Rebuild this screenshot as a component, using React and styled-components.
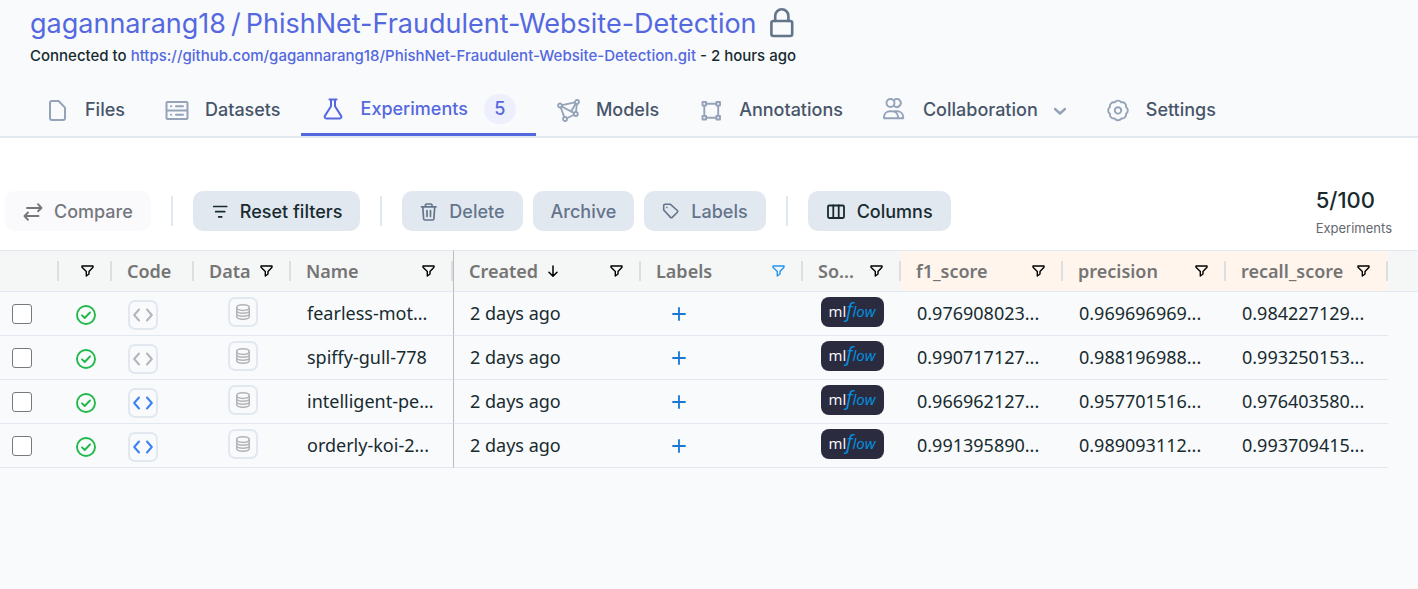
import React from "react";
import styled, { createGlobalStyle, css } from "styled-components";

const GlobalStyle = createGlobalStyle`
  *, *::before, *::after { box-sizing: border-box; }
  html { background: #f9fafc; }
  body { margin: 0; font-family: Inter, "Liberation Sans", sans-serif; color: #172b2f; }
  a { color: inherit; text-decoration: none; }
  button { font: inherit; cursor: pointer; }
`;

/* ---------- icons ---------- */

const Svg = styled.svg`
  display: block;
  flex: none;
  fill: none;
  stroke: currentColor;
  stroke-width: ${(p) => p.$weight || 2};
  stroke-linecap: round;
  stroke-linejoin: round;
`;

const Icon = ({ w = 24, h = w, weight, children }) => (
  <Svg width={w} height={h} viewBox={`0 0 ${w} ${h}`} $weight={weight} aria-hidden="true">
    {children}
  </Svg>
);

const LockIcon = () => (
  <Icon w={26} h={34} weight={2.6}>
    <rect x="2.400" y="14" width="20.800" height="15" rx="2" />
    <path d="M6.200 14V8.900a6.600 6.600 0 0 1 13.200 0V14" />
  </Icon>
);
const FileIcon = () => (
  <Icon>
    <path d="M7 3h6.600L20 9.600V20a2 2 0 0 1-2 2H7a2 2 0 0 1-2-2V5a2 2 0 0 1 2-2Z" />
  </Icon>
);
const DatasetIcon = () => (
  <Icon weight={2}>
    <path d="M2.500 4h19a1 1 0 0 1 1 1v15a1 1 0 0 1-1 1h-19a1 1 0 0 1-1-1V5a1 1 0 0 1 1-1ZM2 12.500h20M6 8.300h.2M11 8.300h7M6 16.800h.2M11 16.800h7" />
  </Icon>
);
const FlaskIcon = () => (
  <Icon>
    <path d="M8.500 2.500h7M10 2.500v6.800L3.900 18.900a1.700 1.700 0 0 0 1.400 2.600h13.400a1.700 1.700 0 0 0 1.400-2.600L14 9.300V2.500" />
  </Icon>
);
const ModelIcon = () => (
  <Icon weight={1.8}>
    <circle cx="4" cy="7.500" r="2" />
    <circle cx="21" cy="4" r="2" />
    <circle cx="19.800" cy="16" r="2" />
    <circle cx="9" cy="21" r="2" />
    <path d="M6 7.100 19 4.400M5.800 8.500l12.300 6.600M4.700 9.400l3.600 9.700M20.800 6l-.8 8M18 16.800l-7.200 3.400M19.600 5.500 15.500 13" />
  </Icon>
);
const AnnotationIcon = () => (
  <Icon weight={1.9}>
    <rect x="3.500" y="4" width="3.600" height="3.600" />
    <rect x="17.400" y="4" width="3.600" height="3.600" />
    <rect x="3.500" y="17.900" width="3.600" height="3.600" />
    <rect x="17.400" y="17.900" width="3.600" height="3.600" />
    <path d="M7.100 5.800h10.300M7.100 19.700h10.300M5.300 7.600v10.300M19.200 7.600v10.300" />
  </Icon>
);
const PeopleIcon = () => (
  <Icon weight={1.9}>
    <circle cx="7.500" cy="5" r="4" />
    <path d="M11.200 1.900a4 4 0 1 1 0 6.200" />
    <path d="M1 20.200v-1.700a6 6 0 0 1 6-5.300h2a6 6 0 0 1 6 5.300v1.700ZM11.500 13.200H14a6 6 0 0 1 6.200 5.300v1.700H15" />
  </Icon>
);
const ChevronIcon = () => (
  <Icon w={12} weight={2.400}>
    <path d="m1 5 5 4.500L11 5" />
  </Icon>
);
const GearIcon = () => (
  <Icon weight={1.9}>
    <path d="M8.670 4.360A4 4 0 0 1 15.330 4.360 4 4 0 0 1 20.040 9.070 4 4 0 0 1 20.040 15.730 4 4 0 0 1 15.330 20.440 4 4 0 0 1 8.670 20.440 4 4 0 0 1 3.960 15.730 4 4 0 0 1 3.960 9.070 4 4 0 0 1 8.670 4.360Z" />
    <circle cx="12" cy="12.400" r="3.200" />
  </Icon>
);
const CompareIcon = () => (
  <Icon w={20} weight={1.900}>
    <path d="M4 6h14M15 2.200 18.500 6 15 9.200M15.500 14H2M5 10.500 1.500 14 5 17.800" />
  </Icon>
);
const LinesIcon = () => (
  <Icon w={18} weight={1.700}>
    <path d="M2.700 3.500h13M4.700 8.700h9M7.700 13.900h3" />
  </Icon>
);
const TrashIcon = () => (
  <Icon w={18} weight={1.700}>
    <path d="M1.500 3.800h14.500M5.500 3.800V2a1 1 0 0 1 1-1H11a1 1 0 0 1 1 1v1.800M2.800 4l.8 11.700A1.400 1.400 0 0 0 5 17h7.500a1.400 1.400 0 0 0 1.400-1.300L14.700 4M7 7.500v6M10.500 7.500v6" />
  </Icon>
);
const TagIcon = () => (
  <Icon w={18} weight={1.600}>
    <path d="M1.700 2.600A1.400 1.400 0 0 1 3.100 1.200h5l7.300 6.300a1.200 1.200 0 0 1 0 1.700L10.200 14.400a1.200 1.200 0 0 1-1.700 0L1.700 7Z" />
    <path d="M4.800 4.500h.1" />
  </Icon>
);
const ColumnsIcon = () => (
  <Icon w={20} weight={1.800}>
    <rect x="2" y="3.500" width="16" height="12.500" rx="1.200" />
    <path d="M7.300 3.500v12.500M12.700 3.500v12.500" />
  </Icon>
);
const FunnelIcon = () => (
  <Icon w={13} h={12} weight={1.400}>
    <path d="M1 1h11v1.300L8 6.500V9L5.300 11V6.500L1 2.300Z" />
  </Icon>
);
const ArrowDownIcon = () => (
  <Icon w={12} weight={1.500}>
    <path d="M6 1v10M2 7.200l4 4 4-4" />
  </Icon>
);
const CheckCircleIcon = () => (
  <Icon w={20} weight={1.900}>
    <circle cx="10" cy="10" r="9" />
    <path d="m6 10.300 2.700 2.700L14 7.500" />
  </Icon>
);
const CodeIcon = () => (
  <Icon w={20} weight={2}>
    <path d="M6 4.500 1.200 10 6 15.500M14 4.500l4.800 5.500L14 15.500" />
  </Icon>
);
const DatabaseIcon = () => (
  <Icon w={16} weight={1.500}>
    <ellipse cx="8" cy="3.600" rx="6.300" ry="2.800" />
    <path d="M1.700 3.600v9c0 1.500 2.800 2.700 6.300 2.700s6.300-1.200 6.300-2.700v-9M1.700 6.600c0 1.500 2.800 2.700 6.300 2.700s6.300-1.200 6.300-2.700M1.700 9.600c0 1.500 2.800 2.700 6.300 2.700s6.300-1.200 6.300-2.700" />
  </Icon>
);
const PlusIcon = () => (
  <Icon w={14} weight={1.800}>
    <path d="M7 1v12M1 7h12" />
  </Icon>
);

/* ---------- header ---------- */

const Header = styled.header`
  background: #f9fafc;
  border-bottom: 2px solid #e2e8f0;
`;

const Heading = styled.div`
  padding: 8px 30px 0;
`;

const TitleRow = styled.div`
  display: flex;
  align-items: center;
  gap: 12px;
  height: 32px;
  color: #64748b;
`;

const Title = styled.h1`
  display: flex;
  gap: 5px;
  margin: 0;
  font-size: 27px;
  font-weight: 400;
  line-height: 32px;
  color: #5468e0;
`;

const Connection = styled.p`
  margin: 6px 0 0;
  font-size: 15px;
  font-weight: 500;
  line-height: 20px;

  a { color: #5468e0; }
`;

const Tabs = styled.nav`
  display: flex;
  margin-top: 18px;
  padding-left: 25px;
`;

const Tab = styled.a`
  display: flex;
  align-items: center;
  gap: 16px;
  height: 52px;
  padding: 0 20px;
  font-size: 18px;
  font-weight: 500;
  line-height: 24px;
  white-space: nowrap;
  color: #475569;

  svg { color: #94a3b8; }

  ${(p) => p.$active && css`
    border-bottom: 3px solid #5468e0;
    color: #5468e0;
    svg { color: #5468e0; }
  `}
`;

const Badge = styled.span`
  width: 32px;
  border-radius: 16px;
  background: #edf0fc;
  line-height: 30px;
  text-align: center;
`;

/* ---------- toolbar ---------- */

const Toolbar = styled.div`
  display: flex;
  align-items: center;
  gap: 20px;
  padding: 44px 26px 10px 5px;
  background: #fff;
`;

const ButtonGroup = styled.div`
  display: flex;
  gap: 10px;
`;

const Divider = styled.span`
  width: 2px;
  height: 30px;
  background: #e2e8f0;
`;

const ToolButton = styled.button`
  display: flex;
  align-items: center;
  gap: 11px;
  height: 40px;
  padding: 2px 18px 0;
  border: 0;
  border-radius: 10px;
  background: ${(p) => (p.$tone === "ghost" ? "#fafafc" : "#e2e8f0")};
  color: ${(p) => ({ ghost: "#74777c", muted: "#64748b" }[p.$tone] || "#172b2f")};
  font-size: 18px;
  font-weight: 500;
  line-height: 24px;
  white-space: nowrap;
`;

const Quota = styled.div`
  margin-left: auto;
  padding-top: 4px;
`;

const QuotaValue = styled.div`
  font-size: 22px;
  font-weight: 500;
  line-height: 28px;
`;

const QuotaLabel = styled.div`
  padding: 5px 0 3px;
  font-size: 13px;
  line-height: 18px;
  color: #64686e;
`;

/* ---------- table ---------- */

const Table = styled.table`
  width: 100%;
  table-layout: fixed;
  border-collapse: separate;
  border-spacing: 0;
  font-family: "Noto Sans", "Open Sans", sans-serif;
  font-size: 18px;
`;

const Col = styled.col`
  width: ${(p) => (p.$width ? `${p.$width}px` : "auto")};
`;

const HeadCell = styled.th`
  height: 42px;
  padding: 0;
  border-top: 1px solid #e2e8f0;
  border-bottom: 1px solid #e2e8f0;
  border-left: ${(p) => (p.$pinEdge ? "1px solid #b8bcc2" : "0")};
  background: ${(p) => (p.$metric ? "#fff5ed" : "#f5f6f6")};
  font-weight: 600;
  text-align: left;
  color: #757575;
`;

const HeadInner = styled.div`
  display: flex;
  align-items: center;
  height: 20px;
  padding-left: 15px;
  border-right: 2px solid #dcdee1;
  line-height: 20px;
  white-space: nowrap;
`;

const SortMark = styled.span`
  margin-left: 9px;
  color: #000;
`;

const FilterButton = styled.button`
  margin-left: auto;
  margin-right: 16px;
  padding: 0;
  border: 0;
  background: none;
  color: ${(p) => (p.$active ? "#2196f3" : "#000")};
`;

const Cell = styled.td`
  height: 44px;
  padding: ${(p) => ({ low: "3px 0 0", high: "0 0 3px", text: "0 0 2px" }[p.$shift] || "0")};
  padding-left: ${(p) => p.$indent || 0}px;
  border-bottom: 1px solid #e2e8f0;
  border-left: ${(p) => (p.$pinEdge ? "1px solid #b8bcc2" : "0")};
  line-height: 24px;
  white-space: nowrap;
`;

const Center = styled.div`
  display: flex;
  justify-content: center;
  color: #22b84b;
`;

const Checkbox = styled.input.attrs({ type: "checkbox" })`
  display: block;
  width: 20px;
  height: 20px;
  margin: 0;
  appearance: none;
  border: 1px solid #767b80;
  border-radius: 3px;
  background: #fff;
`;

const IconButton = styled.button`
  display: grid;
  place-items: center;
  width: 30px;
  height: 30px;
  padding: 0;
  border: 2px solid #e2e8f0;
  border-radius: 7px;
  background: transparent;
  color: ${(p) => (p.$on ? "#3b82f6" : "#b4b5b7")};
`;

const AddButton = styled.button`
  display: block;
  padding: 0;
  border: 0;
  background: none;
  color: #1976d2;
`;

const Mlflow = styled.span`
  display: flex;
  align-items: baseline;
  justify-content: center;
  width: 63px;
  height: 30px;
  border-radius: 8px;
  background: #2b2b40;
  font-family: "Open Sans", "Noto Sans", sans-serif;
  font-size: 15px;
  font-weight: 500;
  line-height: 26px;
  color: #fff;
`;

const MlflowBlue = styled.i`
  font-size: ${(p) => (p.$large ? 20 : 15)}px;
  color: #0194e2;
`;

/* ---------- data ---------- */

const columns = [
  { width: 59, label: "", filter: false },
  { width: 53, label: "", filter: true },
  { width: 82, label: "Code", filter: false },
  { width: 97, label: "Data", filter: true },
  { width: 162, label: "Name", filter: true },
  { width: 188, label: "Created", filter: true, sorted: true, pinEdge: true },
  { width: 162, label: "Labels", filter: true, filtered: true },
  { width: 98, label: "So...", filter: true },
  { width: 162, label: "f1_score", filter: true, metric: true },
  { width: 163, label: "precision", filter: true, metric: true },
  { width: 162, label: "recall_score", filter: true, metric: true },
];

const rows = [
  { name: "fearless-mot...", code: false, scores: ["0.976908023...", "0.969696969...", "0.984227129..."] },
  { name: "spiffy-gull-778", code: false, scores: ["0.990717127...", "0.988196988...", "0.993250153..."] },
  { name: "intelligent-pe...", code: true, scores: ["0.966962127...", "0.957701516...", "0.976403580..."] },
  { name: "orderly-koi-2...", code: true, scores: ["0.991395890...", "0.989093112...", "0.993709415..."] },
];

const ExperimentRow = ({ row }) => (
  <tr>
    <Cell $indent={12}>
      <Checkbox aria-label={`Select ${row.name}`} />
    </Cell>
    <Cell $shift="low">
      <Center><CheckCircleIcon /></Center>
    </Cell>
    <Cell $shift="low" $indent={16}>
      <IconButton $on={row.code} aria-label="Code"><CodeIcon /></IconButton>
    </Cell>
    <Cell $shift="high">
      <Center><IconButton aria-label="Data"><DatabaseIcon /></IconButton></Center>
    </Cell>
    <Cell $shift="text" $indent={16}>{row.name}</Cell>
    <Cell $shift="text" $indent={16} $pinEdge>2 days ago</Cell>
    <Cell $indent={31}>
      <AddButton aria-label="Add label"><PlusIcon /></AddButton>
    </Cell>
    <Cell $shift="high">
      <Center>
        <Mlflow><span>ml</span><MlflowBlue $large>f</MlflowBlue><MlflowBlue>low</MlflowBlue></Mlflow>
      </Center>
    </Cell>
    {row.scores.map((score, i) => (
      <Cell key={i} $shift="text" $indent={16}>{score}</Cell>
    ))}
    <td />
  </tr>
);

export default function App() {
  return (
    <>
      <GlobalStyle />
      <Header>
        <Heading>
          <TitleRow>
            <Title>
              <a href="#owner">gagannarang18</a>
              <span>/</span>
              <a href="#repo">PhishNet-Fraudulent-Website-Detection</a>
            </Title>
            <LockIcon />
          </TitleRow>
          <Connection>
            Connected to <a href="#git">https://github.com/gagannarang18/PhishNet-Fraudulent-Website-Detection.git</a> - 2 hours ago
          </Connection>
        </Heading>
        <Tabs>
          <Tab href="#files"><FileIcon />Files</Tab>
          <Tab href="#datasets"><DatasetIcon />Datasets</Tab>
          <Tab href="#experiments" $active><FlaskIcon />Experiments<Badge>5</Badge></Tab>
          <Tab href="#models"><ModelIcon />Models</Tab>
          <Tab href="#annotations"><AnnotationIcon />Annotations</Tab>
          <Tab href="#collaboration"><PeopleIcon />Collaboration<ChevronIcon /></Tab>
          <Tab href="#settings"><GearIcon />Settings</Tab>
        </Tabs>
      </Header>
      <main>
        <Toolbar>
          <ToolButton $tone="ghost"><CompareIcon />Compare</ToolButton>
          <Divider />
          <ToolButton><LinesIcon />Reset filters</ToolButton>
          <Divider />
          <ButtonGroup>
            <ToolButton $tone="muted"><TrashIcon />Delete</ToolButton>
            <ToolButton $tone="muted">Archive</ToolButton>
            <ToolButton $tone="muted"><TagIcon />Labels</ToolButton>
          </ButtonGroup>
          <Divider />
          <ToolButton><ColumnsIcon />Columns</ToolButton>
          <Quota>
            <QuotaValue>5/100</QuotaValue>
            <QuotaLabel>Experiments</QuotaLabel>
          </Quota>
        </Toolbar>
        <Table>
          <colgroup>
            {columns.map((c, i) => <Col key={i} $width={c.width} />)}
            <Col />
          </colgroup>
          <thead>
            <tr>
              {columns.map((c, i) => (
                <HeadCell key={i} $metric={c.metric} $pinEdge={c.pinEdge}>
                  <HeadInner>
                    {c.label}
                    {c.sorted && <SortMark><ArrowDownIcon /></SortMark>}
                    {c.filter && (
                      <FilterButton $active={c.filtered} aria-label={`Filter ${c.label || "status"}`}>
                        <FunnelIcon />
                      </FilterButton>
                    )}
                  </HeadInner>
                </HeadCell>
              ))}
              <HeadCell as="td" />
            </tr>
          </thead>
          <tbody>
            {rows.map((row) => <ExperimentRow key={row.name} row={row} />)}
          </tbody>
        </Table>
      </main>
    </>
  );
}
